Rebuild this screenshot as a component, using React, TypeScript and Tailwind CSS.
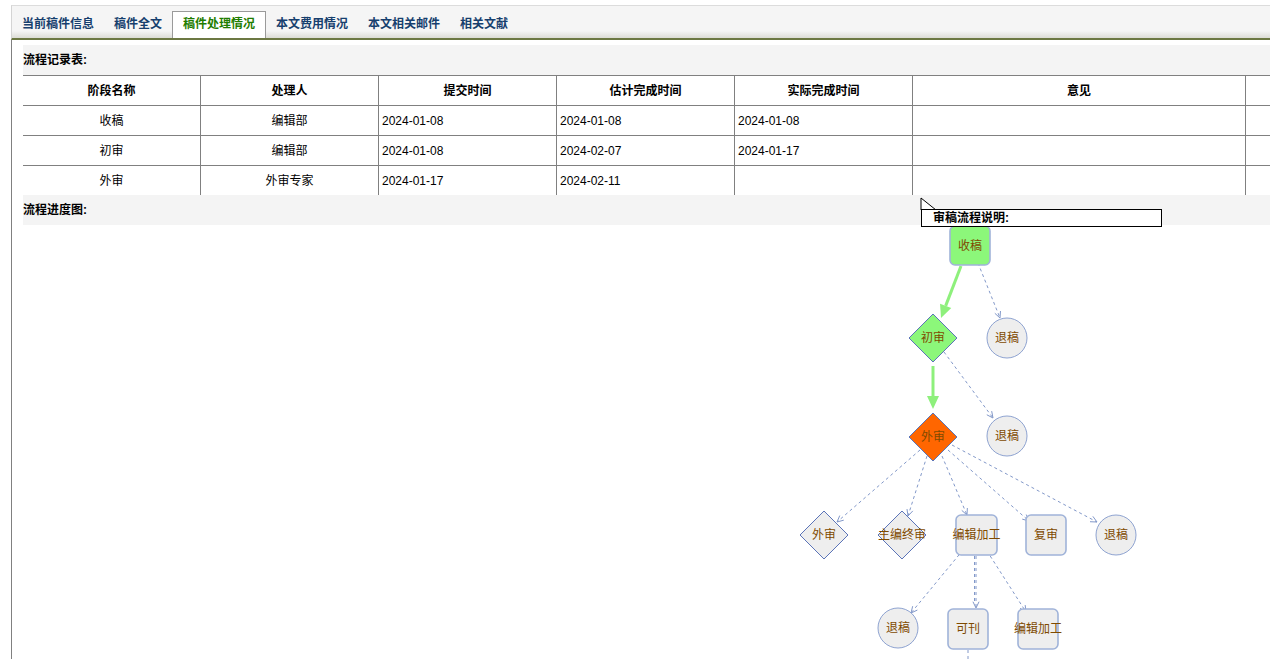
import React from "react";

const tabs = ["当前稿件信息", "稿件全文", "稿件处理情况", "本文费用情况", "本文相关邮件", "相关文献"];

const rows = [
  ["收稿", "编辑部", "2024-01-08", "2024-01-08", "2024-01-08", ""],
  ["初审", "编辑部", "2024-01-08", "2024-02-07", "2024-01-17", ""],
  ["外审", "外审专家", "2024-01-17", "2024-02-11", "", ""],
];

const colW = ["w-[177px]", "w-[178px]", "w-[178px]", "w-[178px]", "w-[178px]", "w-[333px]", "w-[120px]"];

const FONT = '"Liberation Sans", "Noto Sans CJK SC", sans-serif';
const TXT = "#7f4a00";
const LINE = "#8298c9";

// 开放箭头 (虚线连接)
const Dashed = ({ x1, y1, x2, y2 }: { x1: number; y1: number; x2: number; y2: number }) => {
  const a = Math.atan2(y2 - y1, x2 - x1);
  const l = 7;
  const s = 0.45;
  const p1 = `${x2 - l * Math.cos(a - s)},${y2 - l * Math.sin(a - s)}`;
  const p2 = `${x2 - l * Math.cos(a + s)},${y2 - l * Math.sin(a + s)}`;
  return (
    <g stroke={LINE} fill="none" strokeWidth={1}>
      <line x1={x1} y1={y1} x2={x2} y2={y2} strokeDasharray="3 3" />
      <polyline points={`${p1} ${x2},${y2} ${p2}`} />
    </g>
  );
};

// 实线绿色箭头 (已完成流程)
const Green = ({ x1, y1, x2, y2 }: { x1: number; y1: number; x2: number; y2: number }) => {
  const a = Math.atan2(y2 - y1, x2 - x1);
  const l = 13;
  const w = 6;
  const bx = x2 - l * Math.cos(a);
  const by = y2 - l * Math.sin(a);
  const nx = -Math.sin(a) * w;
  const ny = Math.cos(a) * w;
  return (
    <g>
      <line x1={x1} y1={y1} x2={bx} y2={by} stroke="#8ef07c" strokeWidth={3} />
      <polygon points={`${x2},${y2} ${bx + nx},${by + ny} ${bx - nx},${by - ny}`} fill="#8ef07c" />
    </g>
  );
};

const Label = ({ x, y, t }: { x: number; y: number; t: string }) => (
  <text x={x} y={y} fill={TXT} fontSize={12} textAnchor="middle" dominantBaseline="central" fontFamily={FONT}>
    {t}
  </text>
);

const Box = ({ x, y, w = 40, h = 40, fill = "#eeeeee", t }: { x: number; y: number; w?: number; h?: number; fill?: string; t: string }) => (
  <g>
    <rect x={x} y={y} width={w} height={h} rx={5} fill={fill} stroke="#a0b3d9" strokeWidth={1.6} />
    <Label x={x + w / 2} y={y + h / 2} t={t} />
  </g>
);

const Diamond = ({ cx, cy, fill = "#eeeeee", t }: { cx: number; cy: number; fill?: string; t: string }) => (
  <g>
    <polygon points={`${cx},${cy - 24} ${cx + 24},${cy} ${cx},${cy + 24} ${cx - 24},${cy}`} fill={fill} stroke="#5b74b8" strokeWidth={1} />
    <Label x={cx} y={cy} t={t} />
  </g>
);

const Circle = ({ cx, cy, t }: { cx: number; cy: number; t: string }) => (
  <g>
    <circle cx={cx} cy={cy} r={20} fill="#eeeeee" stroke="#8ea3d1" strokeWidth={1} />
    <Label x={cx} y={cy} t={t} />
  </g>
);

const FlowChart = () => (
  <svg className="absolute left-0 top-0" width={1247} height={464}>
    <g transform="translate(-23,-195)">
      {/* 气泡尾巴 */}
      <polygon points="921,198 921,210 936,210" fill="#ffffff" />
      <polyline points="921,210 921,198 936,210" fill="none" stroke="#000" strokeWidth={1} />

      <Green x1={961} y1={266} x2={941} y2={318} />
      <Green x1={933} y1={366} x2={933} y2={409} />
      <Dashed x1={978} y1={263} x2={1000} y2={318} />
      <Dashed x1={944} y1={352} x2={993} y2={418} />

      <Dashed x1={920} y1={450} x2={837} y2={522} />
      <Dashed x1={927} y1={456} x2={908} y2={516} />
      <Dashed x1={942} y1={456} x2={967} y2={515} />
      <Dashed x1={948} y1={450} x2={1029} y2={521} />
      <Dashed x1={952} y1={445} x2={1097} y2={522} />

      <Dashed x1={963} y1={550} x2={911} y2={613} />
      <Dashed x1={976} y1={556} x2={976} y2={608} />
      <line x1={974.5} y1={556} x2={974.5} y2={604} stroke={LINE} strokeDasharray="3 3" />
      <Dashed x1={987} y1={551} x2={1026} y2={612} />
      <line x1={968} y1={650} x2={968} y2={660} stroke={LINE} strokeDasharray="3 3" />

      <Box x={950} y={226} h={39} fill="#8cf77a" t="收稿" />
      <Diamond cx={933} cy={338} fill="#8cf77a" t="初审" />
      <Circle cx={1007} cy={338} t="退稿" />
      <Diamond cx={933} cy={437} fill="#ff6600" t="外审" />
      <Circle cx={1007} cy={436} t="退稿" />

      <Diamond cx={824} cy={535} t="外审" />
      <Diamond cx={902} cy={535} t="主编终审" />
      <Box x={956} y={515} w={41} t="编辑加工" />
      <Box x={1026} y={515} t="复审" />
      <Circle cx={1116} cy={535} t="退稿" />

      <Circle cx={898} cy={628} t="退稿" />
      <Box x={948} y={609} t="可刊" />
      <Box x={1018} y={609} t="编辑加工" />
    </g>
  </svg>
);

export default function App() {
  return (
    <div className="h-[659px] w-[1270px] overflow-hidden bg-white text-[12px] text-black" style={{ fontFamily: FONT }}>
      <div className="ml-[11px] pt-[5px]">
        {/* 标签栏 */}
        <div className="flex h-[35px] items-end border-l border-t border-b-2 border-l-[#d4d4d4] border-t-[#dcdcdc] border-b-[#6c7843] bg-[linear-gradient(to_bottom,#f5f5f5_78%,#dcdcd6)]">
          {tabs.map((t, i) => (
            <div
              key={t}
              className={
                i === 2
                  ? "flex h-[27px] items-center border border-b-0 border-[#9a9a9a] bg-white px-[10px] pb-[2px] font-bold text-[#1f7d00]"
                  : "flex h-[27px] items-center border border-b-0 border-transparent px-[9px] pb-[2px] font-bold text-[#173f6e]"
              }
            >
              {t}
            </div>
          ))}
        </div>

        {/* 内容区 */}
        <div className="h-[620px] border-l border-[#808080] pl-[11px] pt-[5px]">
          <div className="flex h-[30px] items-center bg-[#f4f4f4] font-bold">流程记录表:</div>

          <div className="w-max">
            <div className="flex h-[30px] border-t border-[#808080] font-bold">
              {["阶段名称", "处理人", "提交时间", "估计完成时间", "实际完成时间", "意见", ""].map((h, i) => (
                <div key={i} className={`${colW[i]} flex items-center justify-center ${i > 0 ? "border-l border-[#808080]" : ""}`}>
                  {h}
                </div>
              ))}
            </div>
            {rows.map((r, ri) => (
              <div key={ri} className="flex h-[30px] border-t border-[#808080]">
                {[...r, ""].map((c, i) => (
                  <div
                    key={i}
                    className={`${colW[i]} flex items-center ${i < 2 ? "justify-center" : "pl-[3px]"} ${i > 0 ? "border-l border-[#808080]" : ""}`}
                  >
                    {c}
                  </div>
                ))}
              </div>
            ))}
          </div>

          <div className="relative">
            <div className="flex h-[30px] items-center bg-[#f4f4f4] font-bold">流程进度图:</div>
            <div className="h-[434px]" />
            <FlowChart />
            <div className="absolute left-[898px] top-[14px] flex h-[18px] w-[241px] items-center border border-black bg-white pl-[11px] font-bold">
              审稿流程说明:
            </div>
          </div>
        </div>
      </div>
    </div>
  );
}
